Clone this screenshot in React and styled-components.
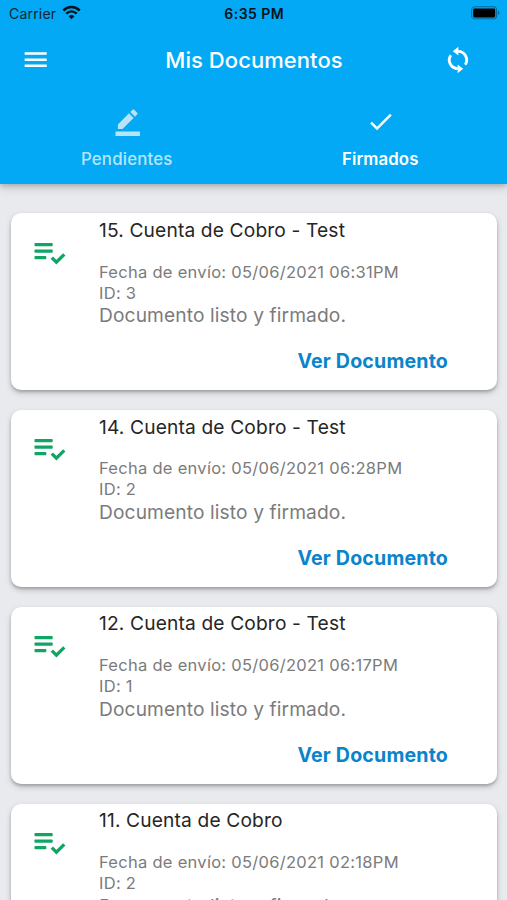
import React from "react";
import styled, { createGlobalStyle } from "styled-components";

const GlobalStyle = createGlobalStyle`
  *, *::before, *::after { box-sizing: border-box; }
  html, body { margin: 0; padding: 0; }
  body {
    height: 900px;
    overflow: hidden;
    background: #e9eaee;
    font-family: Inter, "Liberation Sans", sans-serif;
  }
`;

const Screen = styled.div`
  width: 100%;
  height: 900px;
  overflow: hidden;
  display: flex;
  flex-direction: column;
  background: #e9eaee;
`;

const Header = styled.header`
  flex: none;
  height: 184px;
  color: #fff;
  background: #03a9f4;
  box-shadow: 0 2px 5px rgba(0, 0, 0, 0.2), 0 5px 10px rgba(0, 0, 0, 0.1);
`;

const StatusBar = styled.div`
  height: 27px;
  display: grid;
  grid-template-columns: 1fr auto 1fr;
  align-items: center;
  padding: 0 6px 0 9px;
  color: #0b2636;
`;

const Carrier = styled.div`
  display: flex;
  align-items: center;
  gap: 5.5px;
  font-size: 14px;
  line-height: 17px;
  letter-spacing: 0.2px;

  svg { margin-top: -2px; }
`;

const Clock = styled.time`
  margin-left: -1.5px;
  color: #04131c;
  font-size: 14px;
  line-height: 17px;
  font-weight: 600;
  letter-spacing: 0.45px;
`;

const BatterySlot = styled.div`
  display: flex;
  justify-content: flex-end;
  margin-top: -1px;
`;

const AppBar = styled.div`
  height: 66px;
  display: grid;
  grid-template-columns: 71px 1fr 98px;
  align-items: center;
`;

const IconButton = styled.button`
  display: flex;
  justify-content: center;
  padding: 0;
  border: 0;
  color: #fff;
  background: none;
`;

const Title = styled.h1`
  margin: 0 0 0 28px;
  text-align: center;
  font-size: 22px;
  line-height: 28px;
  font-weight: 500;
  letter-spacing: 0.06px;
`;

const Tabs = styled.nav`
  display: grid;
  grid-template-columns: 1fr 1fr;
  padding-top: 14px;
`;

const Tab = styled.div`
  display: flex;
  flex-direction: column;
  align-items: center;
  gap: 11.6px;
  font-size: 16.8px;
  line-height: 22px;
  font-weight: ${(p) => (p.$active ? 600 : 500)};
  letter-spacing: ${(p) => (p.$active ? "0.1px" : "0.2px")};
  opacity: ${(p) => (p.$active ? 1 : 0.7)};

  svg { margin-left: 1px; }
`;

const List = styled.main`
  display: flex;
  flex-direction: column;
  gap: 19.6px;
  padding: 29.3px 10px 0 10.5px;
`;

const Card = styled.article`
  flex: none;
  height: 177.2px;
  display: grid;
  grid-template-columns: 88.5px 1fr;
  background: #fff;
  border-radius: 10px;
  box-shadow: 0 2px 3px rgba(0, 0, 0, 0.2), 0 3px 6px rgba(0, 0, 0, 0.17);
`;

const CardIcon = styled.div`
  padding: 27.3px 0 0 22.9px;
`;

const CardBody = styled.div`
  display: flex;
  flex-direction: column;
`;

const DocTitle = styled.h2`
  margin: 4.6px 0 0;
  color: #262626;
  font-size: 19.2px;
  line-height: 24px;
  font-weight: 400;
  letter-spacing: 0.14px;
`;

const Meta = styled.div`
  margin-top: 19.8px;
  color: #7b7b7b;
  font-size: 16.5px;
  line-height: 21px;
  letter-spacing: 0.28px;
`;

const Status = styled.p`
  margin: -0.4px 0 0;
  color: #7b7b7b;
  font-size: 19.2px;
  line-height: 24px;
  letter-spacing: 0.11px;
`;

const ViewLink = styled.button`
  align-self: flex-end;
  margin: 22px 49px 0 0;
  padding: 0;
  border: 0;
  background: none;
  color: #0a84cb;
  font-family: inherit;
  font-size: 19.6px;
  line-height: 24px;
  font-weight: 700;
  letter-spacing: 0.17px;
`;

const MaterialIcon = ({ d }) => (
  <svg width="29.4" height="29.4" viewBox="0 0 24 24" fill="currentColor">
    <path d={d} />
  </svg>
);

const icons = {
  menu: "M3 18h18v-2H3v2zm0-5h18v-2H3v2zm0-7v2h18V6H3z",
  sign: "M22 24H2v-4h20v4zM13.06 5.19l3.75 3.75L7.75 18H4v-3.75l9.06-9.06zm4.82 2.68l-3.75-3.75 1.83-1.83c.39-.39 1.02-.39 1.41 0l2.34 2.34c.39.39.39 1.02 0 1.41l-1.83 1.83z",
  check: "M9 16.17 4.83 12l-1.42 1.41L9 19 21 7l-1.41-1.41z",
};

const SyncArrow = ({ transform }) => (
  <g transform={transform}>
    <path d="M15.2 6.4A8.6 8.6 0 0 1 22.2 19.8" fill="none" stroke="currentColor" strokeWidth="2.8" />
    <path d="M9.8 6.2 15.4 1.8V10.6z" fill="currentColor" />
  </g>
);

const SyncIcon = () => (
  <svg width="30" height="30" viewBox="0 0 30 30">
    <SyncArrow />
    <SyncArrow transform="rotate(180 15 15)" />
  </svg>
);

const WifiIcon = () => (
  <svg width="19" height="15" viewBox="0 0 19 15" fill="none" stroke="#06131c">
    <path d="M1.3 5.5C5.9.9 13.1.9 17.7 5.5" strokeWidth="2.5" />
    <path d="M4.3 8.6c2.9-2.9 7.5-2.9 10.4 0" strokeWidth="2.3" />
    <path d="M9.5 14.2 6.6 11.2c1.6-1.5 4.2-1.5 5.8 0z" fill="#06131c" stroke="none" />
  </svg>
);

const BatteryIcon = () => (
  <svg width="30" height="14" viewBox="0 0 30 14">
    <rect x="0.6" y="0.8" width="25" height="12" rx="3.4" fill="none" stroke="#06699b" strokeWidth="1.1" />
    <rect x="2.2" y="2.4" width="22" height="9" rx="1.4" fill="#000" />
    <path d="M27 4.6c1.9.8 1.9 3.6 0 4.4z" fill="#06699b" />
  </svg>
);

const SignedIcon = () => (
  <svg width="34" height="24" viewBox="0 0 34 24">
    <g fill="#11a565">
      <rect x="1.5" y="1.9" width="18.2" height="3.4" rx="0.8" />
      <rect x="1.5" y="8.4" width="18.2" height="3.4" rx="0.8" />
      <rect x="1.5" y="14.9" width="11.8" height="3.4" rx="0.8" />
    </g>
    <path d="M18.8 16.6 23.4 21.2 31.3 13.3" fill="none" stroke="#11a565" strokeWidth="3.3" />
  </svg>
);

const documents = [
  { title: "15. Cuenta de Cobro - Test", sent: "05/06/2021 06:31PM", id: 3 },
  { title: "14. Cuenta de Cobro - Test", sent: "05/06/2021 06:28PM", id: 2 },
  { title: "12. Cuenta de Cobro - Test", sent: "05/06/2021 06:17PM", id: 1 },
  { title: "11. Cuenta de Cobro", sent: "05/06/2021 02:18PM", id: 2 },
];

export default function App() {
  return (
    <Screen>
      <GlobalStyle />
      <Header>
        <StatusBar>
          <Carrier>
            Carrier
            <WifiIcon />
          </Carrier>
          <Clock>6:35 PM</Clock>
          <BatterySlot>
            <BatteryIcon />
          </BatterySlot>
        </StatusBar>
        <AppBar>
          <IconButton aria-label="Menú">
            <MaterialIcon d={icons.menu} />
          </IconButton>
          <Title>Mis Documentos</Title>
          <IconButton aria-label="Sincronizar">
            <SyncIcon />
          </IconButton>
        </AppBar>
        <Tabs>
          <Tab>
            <MaterialIcon d={icons.sign} />
            Pendientes
          </Tab>
          <Tab $active>
            <MaterialIcon d={icons.check} />
            Firmados
          </Tab>
        </Tabs>
      </Header>
      <List>
        {documents.map((doc) => (
          <Card key={doc.title}>
            <CardIcon>
              <SignedIcon />
            </CardIcon>
            <CardBody>
              <DocTitle>{doc.title}</DocTitle>
              <Meta>
                <div>Fecha de envío: {doc.sent}</div>
                <div>ID: {doc.id}</div>
              </Meta>
              <Status>Documento listo y firmado.</Status>
              <ViewLink>Ver Documento</ViewLink>
            </CardBody>
          </Card>
        ))}
      </List>
    </Screen>
  );
}
